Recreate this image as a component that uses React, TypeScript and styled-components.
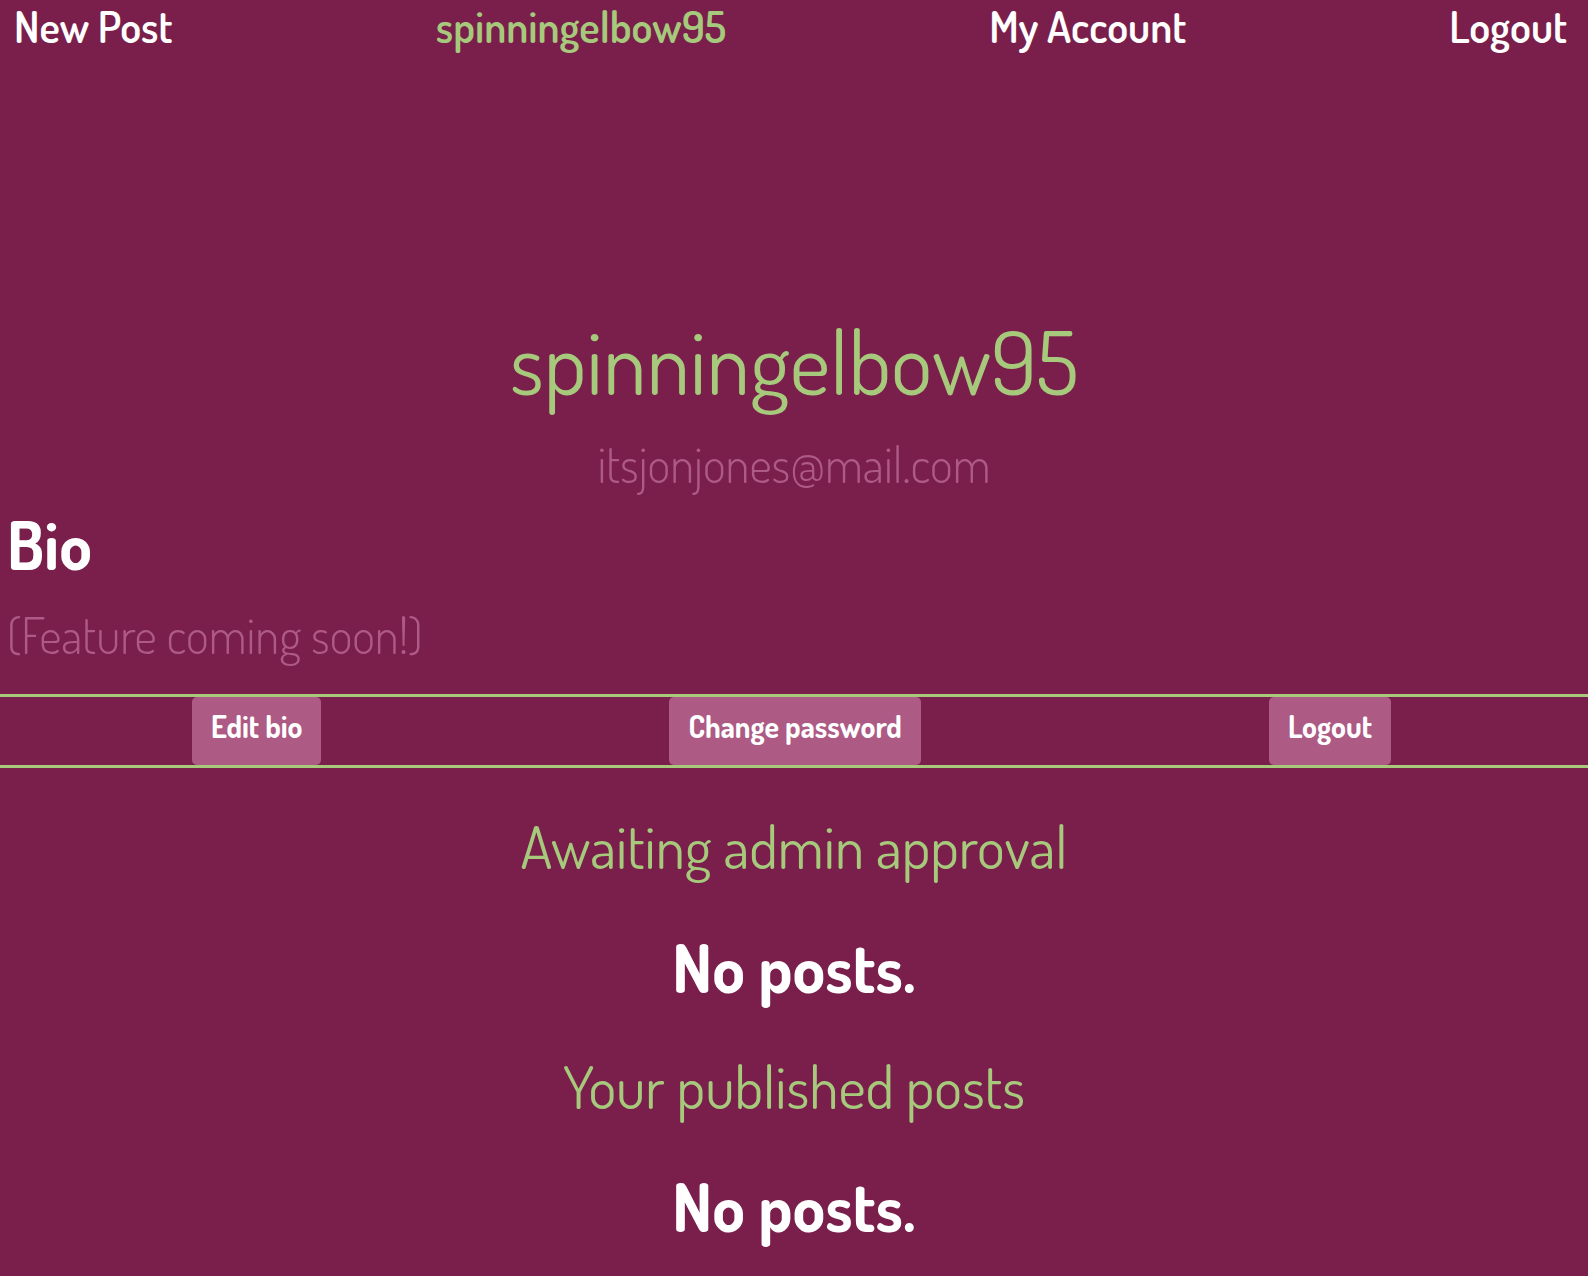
import React from "react";
import styled, { createGlobalStyle } from "styled-components";

const GlobalStyle = createGlobalStyle`
  html, body { margin: 0; padding: 0; background: #7a1f4c; }
  body { font-family: "Dosis", "Roboto Condensed", "Liberation Sans", sans-serif; color: #ffffff; }
  #root { min-height: 1276px; background: #7a1f4c; }
`;

const green = "#a6c97c";
const pink = "#ae5a87";

const Page = styled.div`
  display: flex;
  flex-direction: column;
`;

const Nav = styled.nav`
  display: flex;
  justify-content: space-between;
  align-items: flex-start;
  padding: 0 21px 0 14px;
  height: 52px;
`;

const NavLink = styled.a<{ $accent?: boolean }>`
  font-size: 43px;
  line-height: 52px;
  font-weight: 600;
  color: ${p => (p.$accent ? green : "#ffffff")};
  text-decoration: none;
  cursor: pointer;
`;

const Profile = styled.header`
  display: flex;
  flex-direction: column;
  align-items: center;
  margin-top: 256px;
`;

const Username = styled.h1`
  margin: 0;
  font-size: 88px;
  line-height: 106px;
  font-weight: 400;
  color: ${green};
`;

const Email = styled.p`
  margin: 21px 0 0;
  font-size: 49px;
  line-height: 58px;
  font-weight: 300;
  color: ${pink};
`;

const BioSection = styled.section`
  display: flex;
  flex-direction: column;
  align-items: flex-start;
  padding-left: 7px;
  margin-top: 12px;
`;

const BioTitle = styled.h2`
  margin: 0;
  font-size: 66px;
  line-height: 78px;
  font-weight: 700;
  color: #ffffff;
`;

const BioText = styled.p`
  margin: 23px 0 0;
  font-size: 49px;
  line-height: 58px;
  font-weight: 300;
  color: ${pink};
`;

const ActionBar = styled.div`
  margin-top: 30px;
  display: flex;
  justify-content: space-around;
  align-items: stretch;
  border-top: 3px solid ${green};
  border-bottom: 3px solid ${green};
  padding: 0 23px 0 18px;
  height: 68px;
`;

const ActionButton = styled.button`
  border: none;
  border-radius: 5px;
  background: #ad5a84;
  color: #ffffff;
  font-family: inherit;
  font-size: 30px;
  font-weight: 700;
  line-height: 36px;
  padding: 11px 19px 21px;
  cursor: pointer;
`;

const PostsSection = styled.section`
  display: flex;
  flex-direction: column;
  align-items: center;
  margin-top: 43px;
`;

const SectionTitle = styled.h3<{ $gap: number }>`
  margin: ${p => p.$gap}px 0 0;
  font-size: 59px;
  line-height: 70px;
  font-weight: 400;
  color: ${green};
`;

const Empty = styled.p<{ $gap: number }>`
  margin: ${p => p.$gap}px 0 0;
  font-size: 66px;
  line-height: 78px;
  font-weight: 700;
  color: #ffffff;
`;

export default function App() {
  return (
    <Page>
      <GlobalStyle />
      <Nav>
        <NavLink>New Post</NavLink>
        <NavLink $accent>spinningelbow95</NavLink>
        <NavLink>My Account</NavLink>
        <NavLink>Logout</NavLink>
      </Nav>
      <Profile>
        <Username>spinningelbow95</Username>
        <Email>itsjonjones@mail.com</Email>
      </Profile>
      <BioSection>
        <BioTitle>Bio</BioTitle>
        <BioText>(Feature coming soon!)</BioText>
      </BioSection>
      <ActionBar>
        <ActionButton>Edit bio</ActionButton>
        <ActionButton>Change password</ActionButton>
        <ActionButton>Logout</ActionButton>
      </ActionBar>
      <PostsSection>
        <SectionTitle $gap={0}>Awaiting admin approval</SectionTitle>
        <Empty $gap={47}>No posts.</Empty>
        <SectionTitle $gap={45}>Your published posts</SectionTitle>
        <Empty $gap={46}>No posts.</Empty>
      </PostsSection>
    </Page>
  );
}
